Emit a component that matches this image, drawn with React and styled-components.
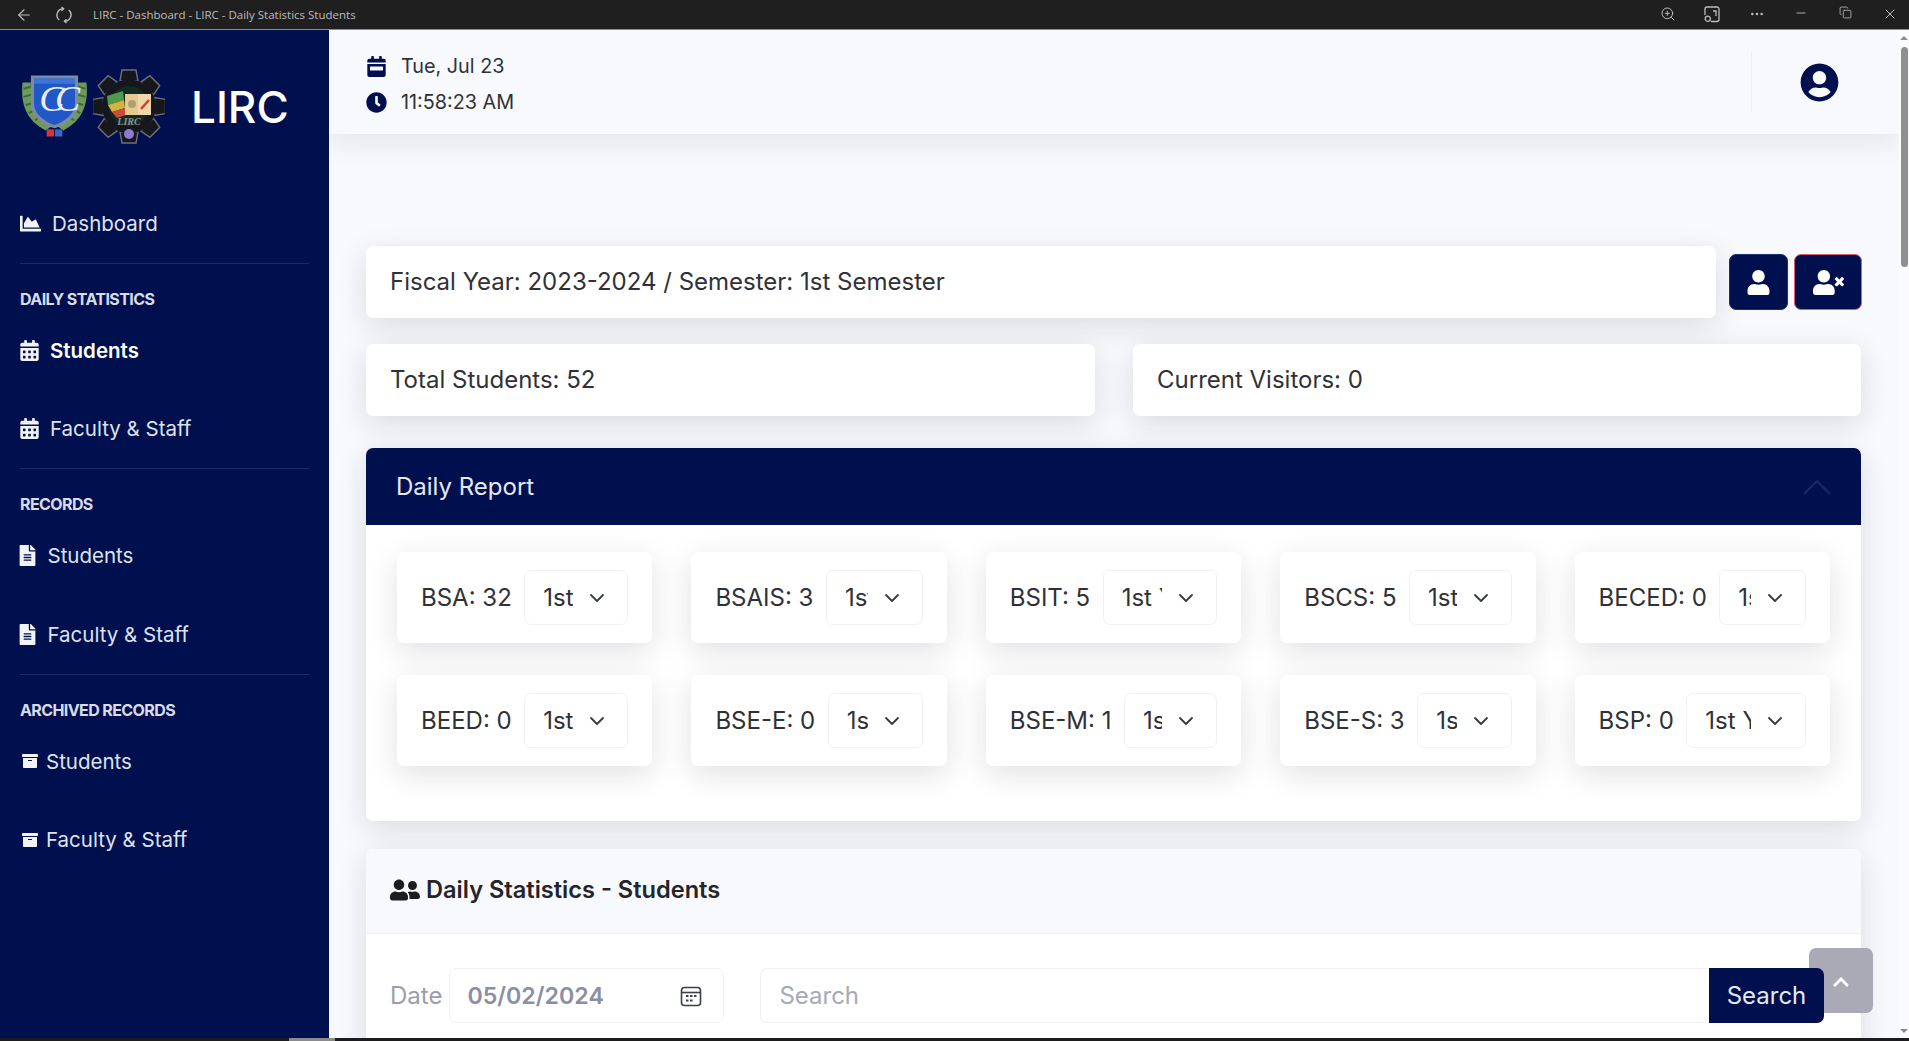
import React from 'react';
import styled, { createGlobalStyle } from 'styled-components';
import {
  FaArchive,
  FaCalendarAlt,
  FaCalendarWeek,
  FaChartArea,
  FaChevronUp,
  FaClock,
  FaFileAlt,
  FaUser,
  FaUserCircle,
  FaUserFriends,
  FaUserTimes,
} from 'react-icons/fa';
import { ArrowLeft, Copy, Minus, MoreHorizontal, X, ZoomIn } from 'lucide-react';

const NAVY = '#00104f';
const PAGE = '#f8f9fd';
const SOFT_SHADOW = '0 8px 30px rgba(20, 24, 50, 0.13)';

const GlobalStyle = createGlobalStyle`
  html, body {
    margin: 0;
    height: 100%;
    overflow: hidden;
    background: ${PAGE};
    font-family: Inter, "Liberation Sans", sans-serif;
    color: #2f3136;
  }
  * { box-sizing: border-box; }
`;

const Frame = styled.div`
  height: 1041px;
  display: flex;
  flex-direction: column;
  overflow: hidden;
`;

const TitleBar = styled.div`
  flex: 0 0 30px;
  display: flex;
  align-items: center;
  background: #1f1f1f;
  border-bottom: 1px solid #8d8d8d;
  color: #bdbdbd;
  padding-left: 15px;
`;

const TitleText = styled.span`
  font-family: "Open Sans", sans-serif;
  font-size: 11.5px;
  margin-left: 21px;
  flex: 1;
`;

const TitleIcons = styled.div`
  display: flex;
  gap: 6.5px;
`;

const TitleIcon = styled.span`
  width: 38px;
  display: flex;
  justify-content: center;
`;

const Workspace = styled.div`
  flex: 1;
  min-height: 0;
  display: flex;
`;

const Sidebar = styled.aside`
  flex: 0 0 329px;
  background: ${NAVY};
  color: #e6e8f0;
  display: flex;
  flex-direction: column;
`;

const Brand = styled.div`
  flex: 0 0 154px;
  display: flex;
  align-items: flex-start;
  padding: 39px 0 0 22px;
`;

const BrandName = styled.span`
  font-size: 44px;
  font-weight: 500;
  line-height: 44px;
  color: #fff;
  margin: 16px 0 0 26px;
`;

const NavItem = styled.div`
  flex: 0 0 78.75px;
  display: flex;
  align-items: center;
  padding-left: ${(p) => p.$inset}px;
  gap: ${(p) => p.$gap}px;
  font-size: 20.5px;
  font-weight: ${(p) => (p.$active ? 600 : 400)};
  color: ${(p) => (p.$active ? '#fff' : '#dfe2ec')};
  svg { color: #f2f3f7; flex: none; }
`;

const NavRule = styled.div`
  flex: 0 0 1px;
  margin: 0 20px;
  background: #1d2a66;
`;

const NavHeading = styled.div`
  flex: 0 0 24px;
  margin: 23px 0 0 20px;
  font-size: 16px;
  line-height: 24px;
  font-weight: 700;
  letter-spacing: -0.6px;
  color: #d9dce8;
`;

const Main = styled.main`
  flex: 1;
  min-width: 0;
  position: relative;
  overflow: hidden;
`;

const TopBar = styled.header`
  height: 104px;
  display: flex;
  align-items: center;
  padding-left: 37px;
  padding-right: 60px;
  background: ${PAGE};
  box-shadow: 0 8px 30px rgba(20, 24, 50, 0.09);
`;

const Clock = styled.div`
  flex: 1;
  display: flex;
  flex-direction: column;
  gap: 13px;
  padding-top: 4px;
`;

const ClockRow = styled.div`
  display: flex;
  align-items: center;
  gap: 14px;
  font-size: 19.8px;
  line-height: 23px;
  svg { color: ${NAVY}; flex: none; }
`;

const TopDivider = styled.div`
  width: 1px;
  height: 62px;
  background: #eff0f5;
  margin-right: 48px;
`;

const Content = styled.div`
  padding: 112px 38px 0 37px;
  display: flex;
  flex-direction: column;
`;

const FiscalRow = styled.div`
  display: flex;
  align-items: center;
  height: 72px;
`;

const Card = styled.div`
  background: #fff;
  border-radius: 7px;
  height: 72px;
  display: flex;
  align-items: center;
  padding: 0 0 2px 24px;
  font-size: 24px;
  box-shadow: ${SOFT_SHADOW};
`;

const FiscalCard = styled(Card)`
  flex: 1;
  margin-right: 13px;
`;

const IconButton = styled.button`
  flex: none;
  width: ${(p) => p.$width}px;
  height: 56px;
  margin-right: ${(p) => p.$after}px;
  display: flex;
  align-items: center;
  justify-content: center;
  background: ${NAVY};
  color: #fff;
  border: 1px solid ${(p) => p.$edge};
  border-radius: 7px;
  padding: 0;
`;

const TotalsRow = styled.div`
  display: grid;
  grid-template-columns: 729px 728px;
  justify-content: space-between;
  margin-top: 26px;
`;

const ReportCard = styled.section`
  margin-top: 32px;
  height: 373px;
  background: #fff;
  border-radius: 7px;
  box-shadow: ${SOFT_SHADOW};
`;

const ReportHeader = styled.div`
  height: 77px;
  display: flex;
  align-items: center;
  justify-content: space-between;
  padding: 0 30px;
  background: ${NAVY};
  border-radius: 7px 7px 0 0;
  color: #e6e8f0;
  font-size: 24px;
`;

const FaintChevron = styled.svg`
  width: 30px;
  height: 16px;
  margin-right: -1px;
  fill: none;
  stroke: #1a2a66;
  stroke-width: 2;
`;

const TileGrid = styled.div`
  display: grid;
  grid-template-columns: repeat(5, minmax(0, 1fr));
  column-gap: 39px;
  row-gap: 32px;
  padding: 27px 31px 0;
`;

const Tile = styled.div`
  height: 91px;
  min-width: 0;
  display: flex;
  align-items: center;
  gap: 12.5px;
  padding: 0 24px;
  background: #fff;
  border-radius: 7px;
  font-size: 24px;
  white-space: nowrap;
  box-shadow: ${SOFT_SHADOW};
`;

const YearSelect = styled.select`
  flex: 1;
  min-width: 0;
  height: 55px;
  appearance: none;
  border: 1px solid #f0f1f5;
  border-radius: 7px;
  padding: 0 54px 0 18px;
  background-color: #fff;
  background-image: url("data:image/svg+xml,%3csvg xmlns='http://www.w3.org/2000/svg' viewBox='0 0 16 16'%3e%3cpath fill='none' stroke='%23343a40' stroke-linecap='round' stroke-linejoin='round' stroke-width='1.8' d='M2 5l6 6 6-6'/%3e%3c/svg%3e");
  background-repeat: no-repeat;
  background-position: right 22px center;
  background-size: 16px 16px;
  font-family: inherit;
  font-size: 24px;
  color: #2f3136;
`;

const StatsCard = styled.section`
  margin-top: 28px;
  background: #fff;
  border-radius: 7px;
  box-shadow: ${SOFT_SHADOW};
`;

const StatsHeader = styled.div`
  height: 85px;
  display: flex;
  align-items: center;
  gap: 6px;
  padding: 0 0 3px 24px;
  background: ${PAGE};
  border-bottom: 1px solid #f0f1f5;
  border-radius: 7px 7px 0 0;
  font-size: 23.6px;
  font-weight: 600;
  color: #23252a;
`;

const FilterRow = styled.div`
  display: flex;
  align-items: center;
  padding: 34px 37px 30px 24px;
`;

const DateLabel = styled.span`
  font-size: 24px;
  color: #9a9eae;
  margin-right: 7px;
`;

const DateField = styled.div`
  flex: 0 0 275px;
  height: 55px;
  display: flex;
  align-items: center;
  justify-content: space-between;
  padding: 0 21px 0 17px;
  border: 1px solid #f0f1f5;
  border-radius: 7px;
  font-size: 23.2px;
  font-weight: 600;
  color: #8b8fa3;
`;

const SearchInput = styled.input`
  flex: 1;
  min-width: 0;
  height: 55px;
  margin-left: 36px;
  padding: 0 18px;
  border: 1px solid #f0f1f5;
  border-right: 0;
  border-radius: 7px 0 0 7px;
  outline: 0;
  font-family: inherit;
  font-size: 24px;
  &::placeholder { color: #a6a9b8; }
`;

const SearchButton = styled.button`
  position: relative;
  z-index: 2;
  flex: 0 0 115px;
  height: 55px;
  background: ${NAVY};
  color: #e6e8f0;
  border: 0;
  border-radius: 0 7px 7px 0;
  font-family: inherit;
  font-size: 24px;
`;

const ScrollTop = styled.button`
  position: absolute;
  z-index: 1;
  top: 918px;
  left: 1480px;
  width: 64px;
  height: 65px;
  display: flex;
  justify-content: center;
  padding: 25px 0 0;
  background: #a9aab5;
  color: #fff;
  border: 0;
  border-radius: 7px;
`;

const ScrollRail = styled.div`
  flex: 0 0 10px;
  background: #fbfbfd;
  display: flex;
  flex-direction: column;
  align-items: center;
  justify-content: space-between;
  padding-top: 6px;
  padding-bottom: 5px;
`;

const RailArrow = styled.div`
  width: 0;
  height: 0;
  border-left: 4px solid transparent;
  border-right: 4px solid transparent;
  border-${(p) => (p.$down ? 'top' : 'bottom')}: 4px solid #8c8c8c;
`;

const RailThumb = styled.div`
  width: 7px;
  height: 220px;
  margin-top: 7px;
  margin-bottom: auto;
  background: #8f8f8f;
  border-radius: 4px;
`;

const BottomStrip = styled.div`
  flex: 0 0 3px;
  background: #1c1c1c;
`;

const BottomThumb = styled.div`
  width: 46px;
  height: 3px;
  margin-left: 289px;
  background: #8b8b8b;
`;

// the reload and the side-panel glyphs of the app window, neither is in lucide
const ReloadGlyph = () => (
  <svg width="16" height="18" viewBox="0 0 16 18" fill="none" stroke="currentColor" strokeWidth="1.4" style={{ marginLeft: 23 }}>
    <path d="M3.2 14 A6.4 6.4 0 0 1 7 2.8" />
    <path d="M12.8 4 A6.4 6.4 0 0 1 9 15.2" />
    <path d="M5.5 1 L7.6 2.8 L5.5 4.8" />
    <path d="M10.5 13.2 L8.4 15.2 L10.5 17" />
  </svg>
);

const PanelGlyph = () => (
  <svg width="16" height="17" viewBox="0 0 16 17" fill="none" stroke="currentColor" strokeWidth="1.3">
    <path d="M7 15.5 H13 A2 2 0 0 0 15 13.5 V3 A2 2 0 0 0 13 1 H3 A2 2 0 0 0 1 3 V9" />
    <path d="M9 5 H12 V10" />
    <circle cx="3.8" cy="12.8" r="2.6" />
  </svg>
);

// small crests, drawn by hand since there is no image file to use
const CollegeCrest = () => (
  <svg width="65" height="62" viewBox="1.5 0.5 62 61" preserveAspectRatio="none" style={{ marginTop: 6, flex: 'none' }}>
    <path d="M2 8 C0 28 5 45 24 55 L31 50 C16 42 9 28 10 8 Z" fill="#6d9a5c" />
    <path d="M63 8 C65 28 60 45 41 55 L34 50 C49 42 56 28 55 8 Z" fill="#6d9a5c" />
    <path d="M3 14 L10 12 M3 22 L10 20 M5 30 L12 28 M8 38 L15 34 M14 45 L20 41 M62 14 L55 12 M62 22 L55 20 M60 30 L53 28 M57 38 L50 34 M51 45 L45 41" stroke="#3d6a3a" strokeWidth="2" />
    <path d="M10 1 H55 V30 C55 41 44 49 32.5 53 C21 49 10 41 10 30 Z" fill="#7f8aa0" />
    <path d="M13 4 H52 V29 C52 39 42 46 32.5 50 C23 46 13 39 13 29 Z" fill="#2058c8" />
    <path d="M13 4 H52 V9 H13 Z" fill="#3f74d6" />
    <text x="33" y="36" textAnchor="middle" fontFamily="Liberation Serif, serif" fontStyle="italic" fontSize="36" letterSpacing="-9" fill="#e8edf7">CC</text>
    <rect x="25" y="54" width="7" height="7" fill="#d8343a" />
    <rect x="33" y="54" width="7" height="7" fill="#3d64c4" />
  </svg>
);

const gearTeeth = [0, 45, 90, 135, 180, 225, 270, 315];

const LibraryCrest = () => (
  <svg width="72" height="75" viewBox="0 0 72 75" style={{ marginLeft: 6, flex: 'none' }}>
    {gearTeeth.map((angle) => (
      <path
        key={angle}
        d="M27 12 L29 1 H43 L45 12 Z"
        fill="#15171c"
        stroke="#6d7077"
        strokeWidth="1.4"
        transform={`rotate(${angle} 36 37.5)`}
      />
    ))}
    <circle cx="36" cy="37.5" r="27" fill="#15171c" />
    <circle cx="36" cy="37" r="20" fill="#122a22" />
    <path d="M14 27 L30 22 L31 31 L15 36 Z" fill="#4f9a4d" />
    <path d="M15 36 L31 31 L32 39 L19 43 Z" fill="#d6b33e" />
    <path d="M19 43 L32 39 L33 46 L24 49 Z" fill="#cb4b39" />
    <rect x="32" y="25" width="26" height="21" fill="#f0d7a8" />
    <rect x="32" y="25" width="13" height="21" fill="#e8c891" />
    <path d="M48 40 L56 31" stroke="#c9402e" strokeWidth="2.5" />
    <circle cx="39" cy="35" r="4" fill="#b0a06e" />
    <text x="36" y="56" textAnchor="middle" fontFamily="Liberation Serif, serif" fontStyle="italic" fontSize="10" fontWeight="700" fill="#8f9298">LIRC</text>
    <circle cx="36" cy="65" r="5" fill="#8d7ad6" />
  </svg>
);

const DatePickerIcon = () => (
  <svg width="22" height="22" viewBox="0 0 22 22" fill="none" stroke="#3b3f47" strokeWidth="1.6">
    <rect x="1.5" y="2.5" width="19" height="18" rx="3" />
    <path d="M1.5 7.5 H20.5" />
    <path d="M6 11 H8.5 M10 11 H12.5 M14 11 H16.5 M6 15.5 H8.5 M10 15.5 H12.5" strokeWidth="2" />
  </svg>
);

const navGroups = [
  {
    heading: 'DAILY STATISTICS',
    icon: <FaCalendarAlt size={21} />,
    inset: 19,
    gap: 10,
    items: [{ label: 'Students', active: true }, { label: 'Faculty & Staff' }],
  },
  {
    heading: 'RECORDS',
    icon: <FaFileAlt size={21} />,
    inset: 17,
    gap: 9.5,
    items: [{ label: 'Students' }, { label: 'Faculty & Staff' }],
  },
  {
    heading: 'ARCHIVED RECORDS',
    icon: <FaArchive size={16} />,
    inset: 22,
    gap: 8,
    items: [{ label: 'Students' }, { label: 'Faculty & Staff' }],
  },
];

const courses = [
  ['BSA', 32], ['BSAIS', 3], ['BSIT', 5], ['BSCS', 5], ['BECED', 0],
  ['BEED', 0], ['BSE-E', 0], ['BSE-M', 1], ['BSE-S', 3], ['BSP', 0],
];

const years = ['1st Year', '2nd Year', '3rd Year', '4th Year'];

const App = () => (
  <Frame>
    <GlobalStyle />
    <TitleBar>
      <ArrowLeft size={18} strokeWidth={1.5} />
      <ReloadGlyph />
      <TitleText>LIRC - Dashboard - LIRC - Daily Statistics Students</TitleText>
      <TitleIcons>
        <TitleIcon><ZoomIn size={16} strokeWidth={1.5} /></TitleIcon>
        <TitleIcon><PanelGlyph /></TitleIcon>
        <TitleIcon><MoreHorizontal size={16} strokeWidth={1.8} /></TitleIcon>
        <TitleIcon><Minus size={14} strokeWidth={1.5} /></TitleIcon>
        <TitleIcon><Copy size={13} strokeWidth={1.5} /></TitleIcon>
        <TitleIcon><X size={16} strokeWidth={1.5} /></TitleIcon>
      </TitleIcons>
    </TitleBar>
    <Workspace>
      <Sidebar>
        <Brand>
          <CollegeCrest />
          <LibraryCrest />
          <BrandName>LIRC</BrandName>
        </Brand>
        <NavItem $inset={20} $gap={11}>
          <FaChartArea size={21} />
          Dashboard
        </NavItem>
        {navGroups.map((group) => (
          <React.Fragment key={group.heading}>
            <NavRule />
            <NavHeading>{group.heading}</NavHeading>
            {group.items.map((item) => (
              <NavItem key={item.label} $inset={group.inset} $gap={group.gap} $active={item.active}>
                {group.icon}
                {item.label}
              </NavItem>
            ))}
          </React.Fragment>
        ))}
      </Sidebar>
      <Main>
        <TopBar>
          <Clock>
            <ClockRow>
              <FaCalendarWeek size={21} />
              Tue, Jul 23
            </ClockRow>
            <ClockRow>
              <FaClock size={21} />
              11:58:23 AM
            </ClockRow>
          </Clock>
          <TopDivider />
          <FaUserCircle size={39} color={NAVY} />
        </TopBar>
        <Content>
          <FiscalRow>
            <FiscalCard>Fiscal Year: 2023-2024 / Semester: 1st Semester</FiscalCard>
            <IconButton $width={59} $after={6} $edge="#1f2f73">
              <FaUser size={25} />
            </IconButton>
            <IconButton $width={68} $after={-1} $edge="#d9606e">
              <FaUserTimes size={31} />
            </IconButton>
          </FiscalRow>
          <TotalsRow>
            <Card>Total Students: 52</Card>
            <Card>Current Visitors: 0</Card>
          </TotalsRow>
          <ReportCard>
            <ReportHeader>
              Daily Report
              <FaintChevron viewBox="0 0 30 16">
                <path d="M2 15 L15 2 L28 15" />
              </FaintChevron>
            </ReportHeader>
            <TileGrid>
              {courses.map(([name, count]) => (
                <Tile key={name}>
                  {name}: {count}
                  <YearSelect defaultValue="1st Year" aria-label={`${name} year`}>
                    {years.map((year) => (
                      <option key={year}>{year}</option>
                    ))}
                  </YearSelect>
                </Tile>
              ))}
            </TileGrid>
          </ReportCard>
          <StatsCard>
            <StatsHeader>
              <FaUserFriends size={30} color="#1c1d21" />
              Daily Statistics - Students
            </StatsHeader>
            <FilterRow>
              <DateLabel>Date</DateLabel>
              <DateField>
                05/02/2024
                <DatePickerIcon />
              </DateField>
              <SearchInput placeholder="Search" />
              <SearchButton>Search</SearchButton>
            </FilterRow>
          </StatsCard>
        </Content>
        <ScrollTop>
          <FaChevronUp size={18} />
        </ScrollTop>
      </Main>
      <ScrollRail>
        <RailArrow />
        <RailThumb />
        <RailArrow $down />
      </ScrollRail>
    </Workspace>
    <BottomStrip>
      <BottomThumb />
    </BottomStrip>
  </Frame>
);

export default App;
